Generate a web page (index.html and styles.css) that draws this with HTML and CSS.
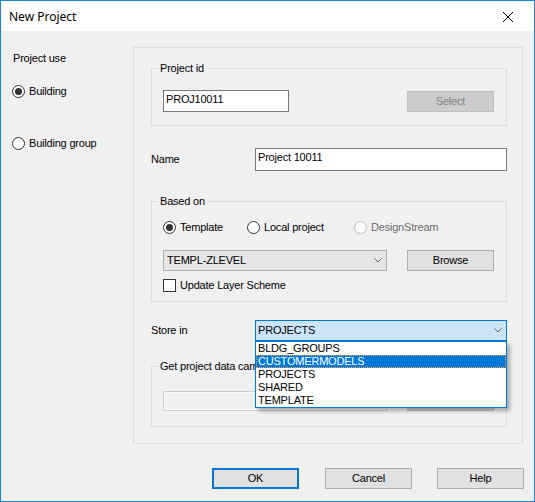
FILE: index.html
```html
<!DOCTYPE html>
<html>
<head>
<meta charset="utf-8">
<title>New Project</title>
<link rel="stylesheet" href="styles.css">
</head>
<body>
<div class="window">
  <div class="titlebar">
    <span class="title">New Project</span>
    <svg class="close" width="10" height="10" viewBox="0 0 10 10"><path d="M0 0L10 10M10 0L0 10" stroke="#000" stroke-width="1" fill="none"/></svg>
  </div>
  <div class="client">
    <div class="content">
      <div class="left">
        <div class="caption">Project use</div>
        <div class="radio r-building"><span class="rb checked"></span>Building</div>
        <div class="radio r-group"><span class="rb"></span>Building group</div>
      </div>
      <div class="panel">
        <fieldset class="group g-id">
          <legend>Project id</legend>
          <div class="gbody">
            <div class="edit id-edit">PROJ10011</div>
            <div class="btn disabled sel-btn">Select</div>
          </div>
        </fieldset>

        <div class="field name-row">
          <span class="label">Name</span>
          <div class="edit wide-edit">Project 10011</div>
        </div>

        <fieldset class="group g-based">
          <legend>Based on</legend>
          <div class="gbody col">
            <div class="radios">
              <div class="radio w-template"><span class="rb checked"></span>Template</div>
              <div class="radio w-local"><span class="rb"></span>Local project</div>
              <div class="radio off"><span class="rb"></span>DesignStream</div>
            </div>
            <div class="row">
              <div class="combo templ">
                <span>TEMPL-ZLEVEL</span>
                <svg class="chev" width="8" height="5" viewBox="0 0 8 5"><path d="M0.5 0.5L4 4L7.5 0.5" fill="none" stroke="#606060"/></svg>
              </div>
              <div class="btn">Browse</div>
            </div>
            <div class="check"><span class="cb"></span>Update Layer Scheme</div>
          </div>
        </fieldset>

        <div class="field store-row">
          <span class="label">Store in</span>
          <div class="combo-wrap">
            <div class="combo active">
              <span>PROJECTS</span>
              <svg class="chev" width="8" height="5" viewBox="0 0 8 5"><path d="M0.5 0.5L4 4L7.5 0.5" fill="none" stroke="#606060"/></svg>
            </div>
            <ul class="droplist">
              <li>BLDG_GROUPS</li>
              <li class="hl">CUSTOMERMODELS</li>
              <li>PROJECTS</li>
              <li>SHARED</li>
              <li>TEMPLATE</li>
            </ul>
          </div>
        </div>

        <fieldset class="group g-data">
          <legend>Get project data carrier</legend>
          <div class="gbody">
            <div class="edit dis-edit"></div>
            <div class="btn disabled data-btn"></div>
          </div>
        </fieldset>
      </div>
    </div>
    <div class="footer">
      <div class="btn default">OK</div>
      <div class="btn cancel">Cancel</div>
      <div class="btn help">Help</div>
    </div>
  </div>
</div>
</body>
</html>
```
FILE: styles.css
```css
* { box-sizing: border-box; }
html, body { margin: 0; padding: 0; }
body {
  font-family: "Liberation Sans", Arial, sans-serif;
  font-size: 11px;
  line-height: 13px;
  letter-spacing: -0.2px;
  color: #000;
  background: #fff;
}
.window {
  width: 535px;
  height: 502px;
  border: 1px solid #1883d7;
  display: flex;
  flex-direction: column;
  background: #f0f0f0;
}
.titlebar {
  height: 30px;
  flex: none;
  background: #fff;
  display: flex;
  align-items: center;
  justify-content: space-between;
  padding-left: 8px;
  padding-right: 21px;
}
.title {
  font-family: "Noto Sans", "Segoe UI", sans-serif;
  font-size: 12px;
  line-height: 16px;
  letter-spacing: 0;
  margin-top: 1px;
}
.close { display: block; margin-top: 1px; }
.client { flex: 1; display: flex; flex-direction: column; }
.content { display: flex; padding-top: 16px; }

.left { width: 132px; flex: none; padding-left: 11px; }
.caption { margin-top: 5px; padding-left: 1px; }
.radio { display: flex; align-items: center; height: 13px; white-space: nowrap; }
.r-building { margin-top: 20px; }
.r-group { margin-top: 39px; }
.rb {
  width: 13px; height: 13px; flex: none;
  border: 1px solid #333; border-radius: 50%;
  background: #fff; margin-right: 4px;
  position: relative;
}
.rb.checked::after {
  content: ""; position: absolute; left: 2px; top: 2px;
  width: 7px; height: 7px; border-radius: 50%; background: #333;
}
.radio.off { color: #6d6d6d; }
.radio.off .rb { border-color: #bcbcbc; background: #fcfcfc; }

.panel {
  width: 390px;
  height: 397px;
  flex: none;
  border: 1px solid #dcdcdc;
  padding: 14px 15px 0 17px;
}
.group {
  margin: 0; padding: 0; min-width: 0;
  border: 1px solid #dcdcdc;
}
.group legend { margin-left: 6px; padding: 0 2px; line-height: 13px; }
.gbody { display: flex; justify-content: space-between; align-items: flex-start; padding: 15px 12px 13px 11px; }
.gbody.col { flex-direction: column; justify-content: flex-start; align-items: stretch; padding: 13px 12px 9px 11px; }
.g-data .gbody { padding: 18px 12px 15px 11px; }

.edit {
  background: #fff; border: 1px solid #7a7a7a;
  padding: 2px 2px 0; white-space: nowrap;
}
.id-edit { width: 126px; height: 22px; }
.wide-edit { width: 252px; height: 23px; }
.dis-edit { width: 224px; height: 20px; background: #f0f0f0; border-color: #cccccc; box-shadow: inset 0 0 0 1px #fbfbfb; }

.btn {
  width: 87px; height: 21px; flex: none;
  background: #e1e1e1; border: 1px solid #adadad;
  display: flex; align-items: center; justify-content: center;
}
.btn.disabled { background: #cccccc; border-color: #bfbfbf; color: #838383; }
.sel-btn { margin-top: 1px; }
.data-btn { height: 20px; }

.field { display: flex; align-items: center; }
.field .label { width: 104px; flex: none; }
.name-row { margin-top: 22px; }
.g-based { margin-top: 24px; }
.store-row { margin-top: 18px; }
.g-data { margin-top: 19px; }

.radios { display: flex; }
.w-template { width: 84px; }
.w-local { width: 107px; }
.row { display: flex; justify-content: space-between; margin-top: 16px; }

.combo {
  height: 21px; display: flex; align-items: center; justify-content: space-between;
  background: #e5e5e5; border: 1px solid #adadad; padding: 0 4px 0 3px;
  white-space: nowrap;
}
.templ { width: 224px; }
.combo.active { width: 252px; background: #cce4f7; border-color: #0078d7; padding-left: 2px; }
.chev { display: block; flex: none; }

.check { display: flex; align-items: center; height: 13px; margin-top: 8px; }
.cb { width: 13px; height: 13px; border: 1px solid #333; background: #fff; margin-right: 4px; flex: none; }

.combo-wrap { position: relative; width: 252px; }
.droplist {
  position: absolute; left: 0; top: 21px; z-index: 5;
  width: 252px; margin: 0; padding: 0; list-style: none;
  background: #fff; border: 1px solid #0078d7;
  box-shadow: 3px 3px 4px rgba(0, 0, 0, 0.3);
}
.droplist li { height: 13px; line-height: 13px; padding-left: 2px; white-space: nowrap; }
.droplist li.hl {
  background: #0078d7; color: #fff;
  border: 1px dotted #f4a24a; padding-left: 1px; line-height: 11px;
}

.footer { display: flex; justify-content: flex-end; padding-right: 10px; margin-top: 24px; }
.btn.default { border: 2px solid #0078d7; }
.cancel { margin-left: 26px; }
.help { margin-left: 25px; }
```
